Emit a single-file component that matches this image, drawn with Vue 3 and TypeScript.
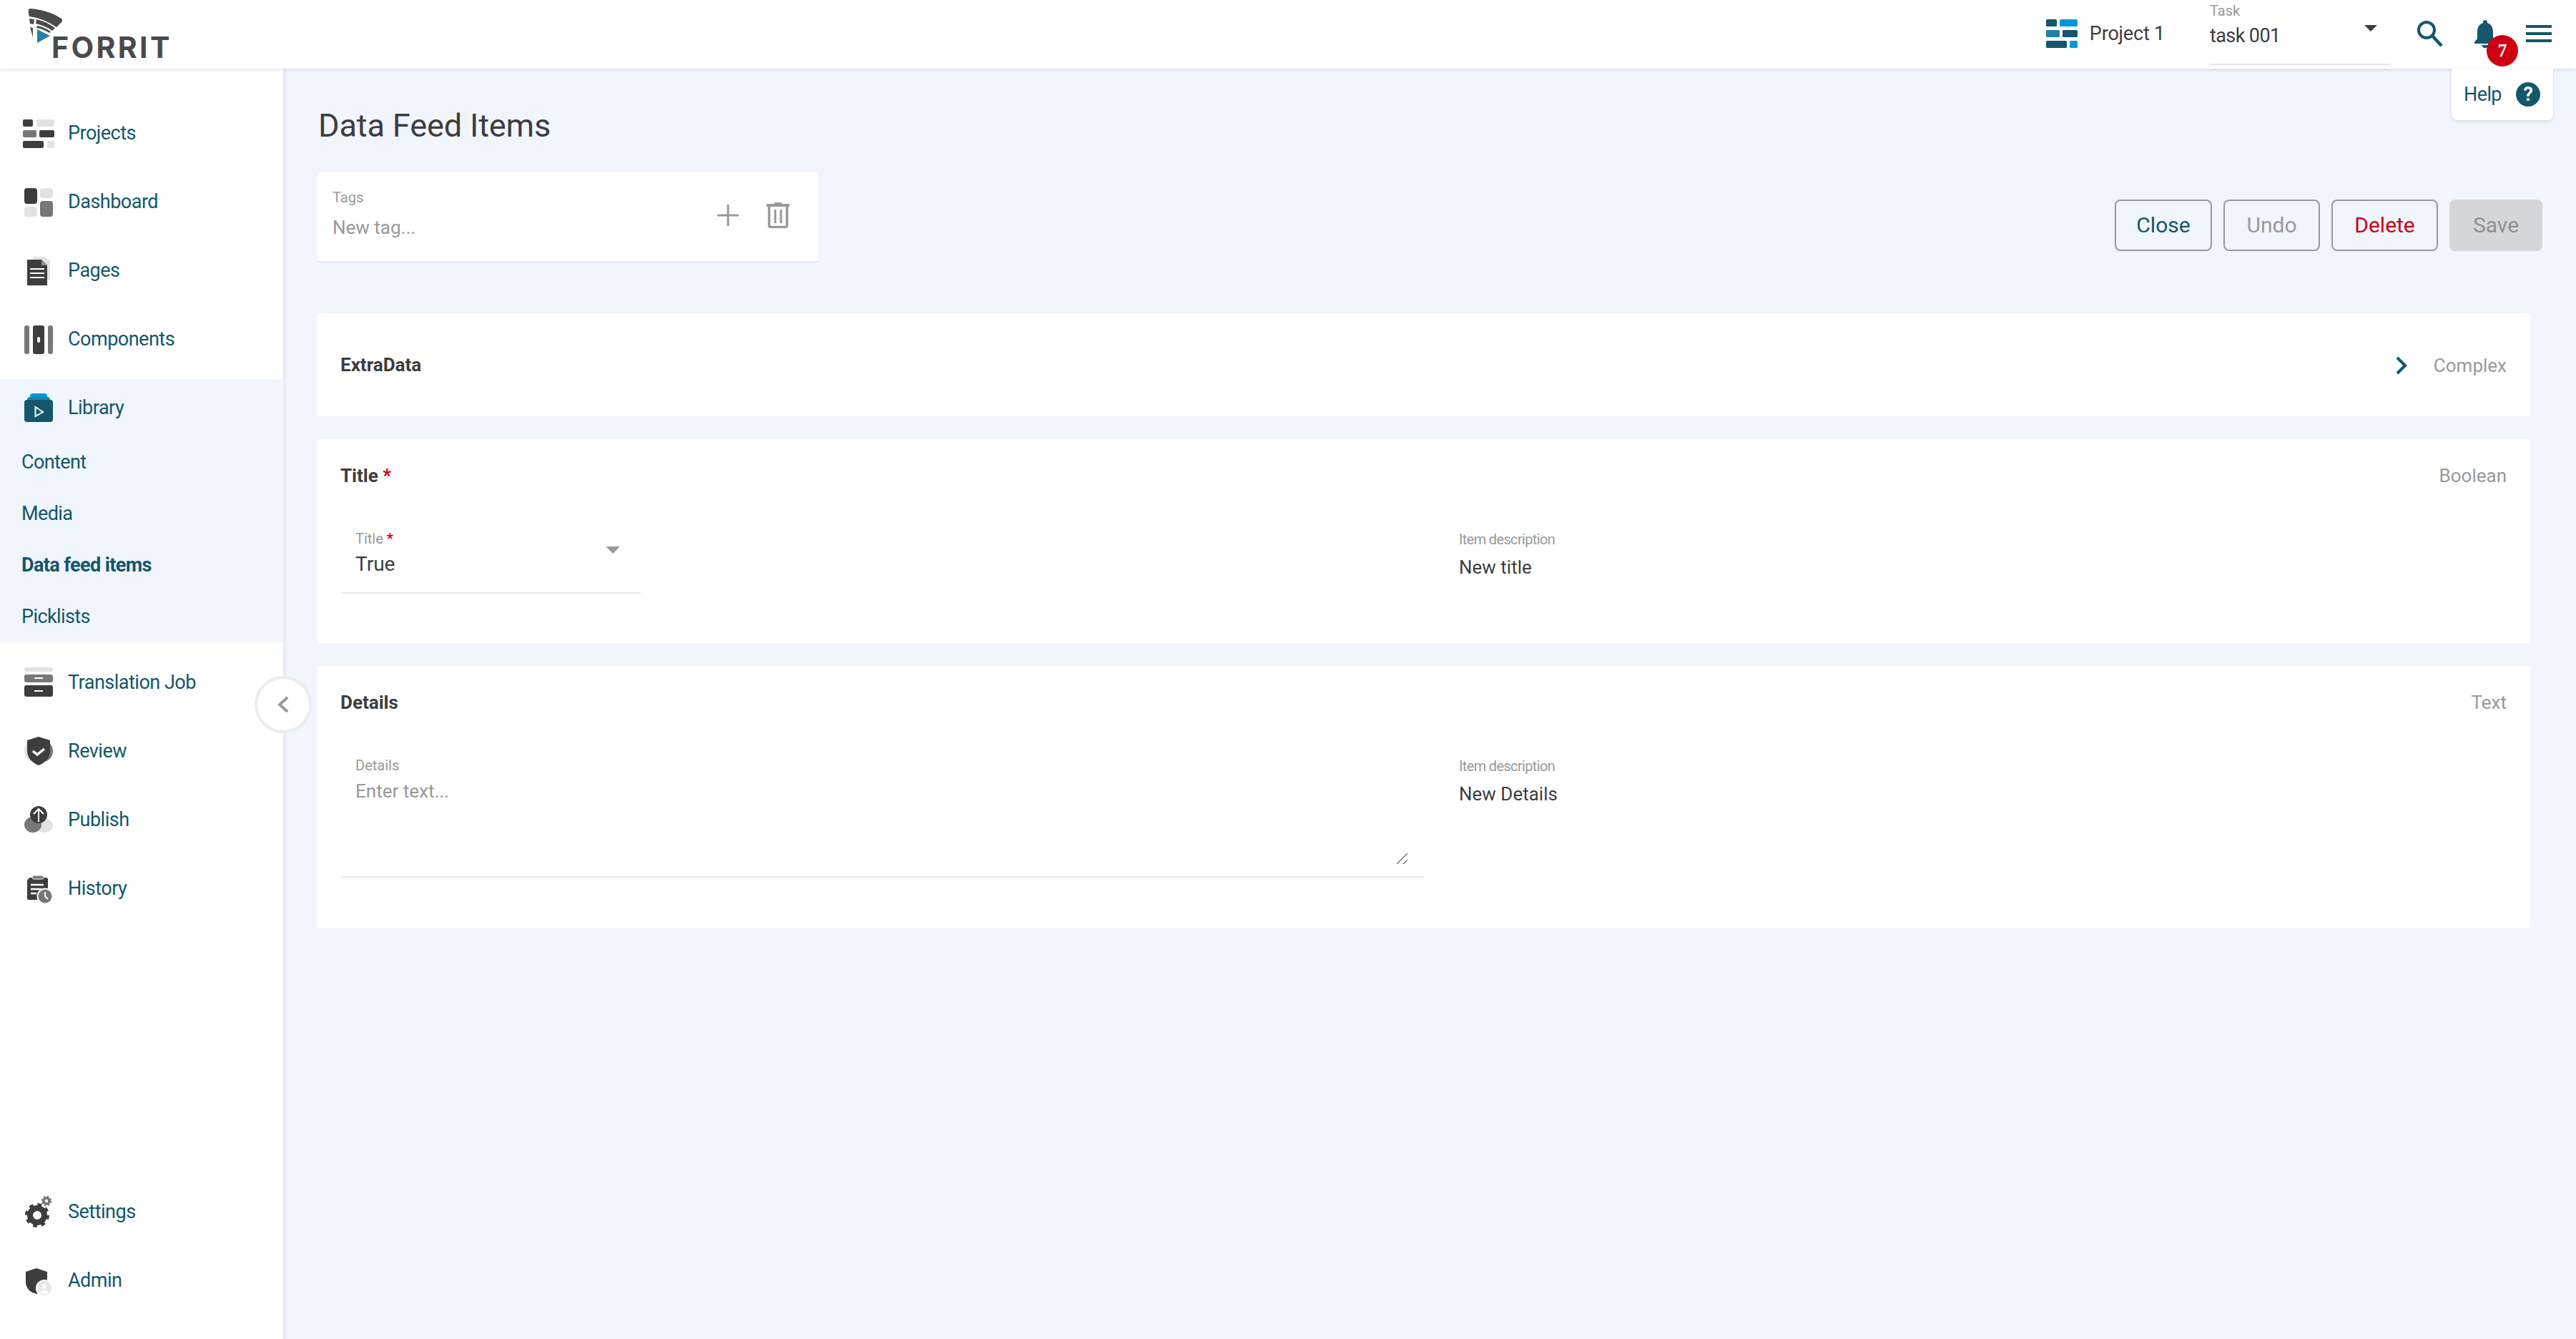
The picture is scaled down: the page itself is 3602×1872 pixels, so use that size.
<script setup lang="ts">
const subItems: { label: string; active?: boolean }[] = [
  { label: 'Content' },
  { label: 'Media' },
  { label: 'Data feed items', active: true },
  { label: 'Picklists' },
]
</script>

<template>
  <div class="app">
    <header class="topbar">
      <div class="logo">
        <svg class="logo-mark" width="60" height="62" viewBox="36 8 60 62">
          <path d="M42 12 C58 13 74 18 86 26 Q88 29 86 31 L79 38 C67 30 55 25 41 23 Q39 17 40 14 Q40 12 42 12 Z" fill="#4a4a4a" />
          <path d="M41 26 L48 27 L47 34 L42 33 Z" fill="#4a4a4a" />
          <path d="M51 27 C60 29 69 33 77 39 L73 43 C66 38 59 35 50 33 Z" fill="#4a4a4a" />
          <path d="M52 36 C59 37 65 40 71 44 L69 46 C64 43 58 40 51 39 Z" fill="#4a4a4a" />
          <path d="M42 38 L46 39 L46 52 Z" fill="#4a4a4a" />
          <path d="M52 41 L70 50 L52 60 Z" fill="#2482a8" />
        </svg>
        <span class="logo-text">FORRIT</span>
      </div>

      <div class="top-right">
        <div class="project">
          <svg width="44" height="40" viewBox="0 0 44 40">
            <rect x="0" y="0" width="15" height="10" rx="1.5" fill="#14566b" />
            <rect x="19" y="0" width="25" height="10" rx="1.5" fill="#0099dd" />
            <rect x="0" y="15" width="19" height="10" rx="1.5" fill="#2283a8" />
            <rect x="23" y="15" width="21" height="10" rx="1.5" fill="#14566b" />
            <rect x="0" y="30" width="29" height="10" rx="1.5" fill="#14566b" />
            <rect x="33" y="30" width="11" height="10" rx="1.5" fill="#0099dd" />
          </svg>
          <span>Project 1</span>
        </div>
        <div class="task">
          <span class="task-label">Task</span>
          <span class="task-value">task 001</span>
          <i class="task-caret"></i>
        </div>
        <svg class="search" width="36" height="36" viewBox="0 0 36 36" fill="none" stroke="#14566b">
          <circle cx="13" cy="13" r="11" stroke-width="4" />
          <path d="M21 21 L34 35" stroke-width="4.5" />
        </svg>
        <div class="bell">
          <svg width="32" height="40" viewBox="0 0 32 40" fill="#14566b">
            <path d="M16 0 Q19 0 19 4 C25 6 27 11 27 17 L27 26 L31 31 L31 33 L1 33 L1 31 L5 26 L5 17 C5 11 7 6 13 4 Q13 0 16 0 Z" />
            <path d="M11 35 L21 35 Q20 39 16 39 Q12 39 11 35 Z" />
          </svg>
          <span class="badge">7</span>
        </div>
        <div class="menu"><i></i><i></i><i></i></div>
      </div>

      <div class="help">
        <span>Help</span>
        <span class="help-mark">?</span>
      </div>
    </header>

    <div class="body">
      <aside class="sidebar">
        <nav class="nav-top">
          <a class="nav-row">
            <svg class="ico" width="44" height="48" viewBox="0 0 44 48">
              <rect x="0" y="5" width="14" height="10" rx="2" fill="#3d3d3d" />
              <rect x="19" y="5" width="25" height="10" rx="2" fill="#e2e2e2" />
              <rect x="0" y="20" width="19" height="10" rx="2" fill="#777" />
              <rect x="23" y="20" width="21" height="10" rx="2" fill="#3d3d3d" />
              <rect x="0" y="35" width="29" height="10" rx="2" fill="#3d3d3d" />
              <rect x="34" y="35" width="10" height="10" rx="2" fill="#e2e2e2" />
            </svg>
            <span>Projects</span>
          </a>
          <a class="nav-row">
            <svg class="ico" width="44" height="48" viewBox="0 0 44 48">
              <rect x="2" y="5" width="18" height="22" rx="4" fill="#3d3d3d" />
              <rect x="24" y="5" width="18" height="14" rx="4" fill="#e2e2e2" />
              <rect x="2" y="31" width="18" height="14" rx="4" fill="#e2e2e2" />
              <rect x="24" y="23" width="18" height="22" rx="4" fill="#777" />
            </svg>
            <span>Dashboard</span>
          </a>
          <a class="nav-row">
            <svg class="ico" width="44" height="48" viewBox="0 0 44 48">
              <path d="M14 5 L32 5 L38 11 L38 37 L14 37 Z" fill="#e2e2e2" />
              <path d="M6 9 L26 9 L34 17 L34 45 L6 45 Z" fill="#3d3d3d" />
              <path d="M26 9 L34 17 L26 17 Z" fill="#8a8a8a" />
              <path d="M10 22 H30 M10 28 H30 M10 34 H30" stroke="#fff" stroke-width="2" />
            </svg>
            <span>Pages</span>
          </a>
          <a class="nav-row">
            <svg class="ico" width="44" height="48" viewBox="0 0 44 48">
              <rect x="2" y="5" width="7" height="40" rx="3" fill="#777" />
              <rect x="14" y="5" width="16" height="40" rx="3" fill="#3d3d3d" />
              <rect x="35" y="5" width="7" height="40" rx="3" fill="#777" />
              <rect x="20" y="21" width="4" height="8" rx="2" fill="#fff" />
            </svg>
            <span>Components</span>
          </a>
        </nav>

        <section class="library">
          <a class="nav-row library-head">
            <svg class="ico" width="44" height="48" viewBox="0 0 44 48">
              <rect x="10" y="4" width="24" height="12" rx="4" fill="#0099dd" />
              <rect x="6" y="9" width="32" height="12" rx="4" fill="#2283a8" />
              <rect x="2" y="13" width="40" height="31" rx="4" fill="#14566b" />
              <path d="M17.500 23 L28 30 L17.500 36 Z" fill="none" stroke="#fff" stroke-width="2" />
            </svg>
            <span>Library</span>
          </a>
          <a v-for="item in subItems" :key="item.label" class="sub-row" :class="{ active: item.active }">{{ item.label }}</a>
        </section>

        <nav class="nav-mid">
          <a class="nav-row">
            <svg class="ico" width="44" height="48" viewBox="0 0 44 48">
              <rect x="2" y="3" width="40" height="6" rx="3" fill="#e2e2e2" />
              <rect x="2" y="13" width="40" height="11" rx="3" fill="#777" />
              <rect x="2" y="28" width="40" height="16" rx="3" fill="#3d3d3d" />
              <path d="M16 18 H28 M16 36 H28" stroke="#fff" stroke-width="2" />
            </svg>
            <span>Translation Job</span>
          </a>
          <a class="nav-row">
            <svg class="ico" width="44" height="48" viewBox="0 0 44 48">
              <ellipse cx="16" cy="24" rx="14" ry="15" fill="#e2e2e2" />
              <ellipse cx="28" cy="24" rx="14" ry="15" fill="#777" />
              <path d="M22 4 L38 9 L38 24 C38 34 30 41 22 44 C14 41 6 34 6 24 L6 9 Z" fill="#3d3d3d" />
              <path d="M14 24 L20 29 L30 21" fill="none" stroke="#fff" stroke-width="3.500" />
            </svg>
            <span>Review</span>
          </a>
          <a class="nav-row">
            <svg class="ico" width="44" height="48" viewBox="0 0 44 48">
              <ellipse cx="30" cy="32" rx="12" ry="10" fill="#e2e2e2" />
              <ellipse cx="14" cy="31" rx="12" ry="11" fill="#777" />
              <circle cx="22" cy="17" r="12" fill="#3d3d3d" />
              <path d="M22 27 V9 M15 16 L22 9 L29 16" fill="none" stroke="#fff" stroke-width="2" />
            </svg>
            <span>Publish</span>
          </a>
          <a class="nav-row">
            <svg class="ico" width="44" height="48" viewBox="0 0 44 48">
              <path d="M8 11 Q8 9 10 9 L33 9 Q35 9 35 11 L35 40 L8 40 Q6 40 6 38 L6 13 Q6 11 8 11 Z" fill="#3d3d3d" />
              <rect x="13" y="6" width="16" height="5" rx="2.500" fill="#777" stroke="#fff" stroke-width="1" />
              <path d="M11 19 H29 M11 25 H26 M11 31 H19" stroke="#fff" stroke-width="2.500" />
              <circle cx="31" cy="35" r="10.500" fill="#777" stroke="#fff" stroke-width="2" />
              <path d="M31 29 V35 L35 39" fill="none" stroke="#fff" stroke-width="2" />
            </svg>
            <span>History</span>
          </a>
        </nav>

        <nav class="nav-bottom">
          <a class="nav-row">
            <svg class="ico" width="44" height="48" viewBox="0 0 44 48">
              <g fill="none" stroke="#3d3d3d">
                <circle cx="20" cy="29" r="10" stroke-width="8" />
                <circle cx="20" cy="29" r="14.500" stroke-width="5" stroke-dasharray="5.500 5.890" />
              </g>
              <g fill="none" stroke="#777">
                <circle cx="33" cy="9" r="4" stroke-width="3.500" />
                <circle cx="33" cy="9" r="6" stroke-width="2.500" stroke-dasharray="2.500 2.210" />
              </g>
            </svg>
            <span>Settings</span>
          </a>
          <a class="nav-row">
            <svg class="ico" width="44" height="48" viewBox="0 0 44 48">
              <path d="M19 7 L34 12 L34 26 C34 36 27 41 19 43 C11 41 4 36 4 26 L4 12 Z" fill="#3d3d3d" />
              <circle cx="30" cy="35" r="12" fill="#fff" />
              <circle cx="30" cy="35" r="10" fill="#e6e6e6" />
              <circle cx="30" cy="32.500" r="3.200" fill="#fff" />
              <path d="M23.500 41 Q30 34 36.500 41 L30 44 Z" fill="#fff" />
            </svg>
            <span>Admin</span>
          </a>
        </nav>

        <button class="collapse" type="button" aria-label="Collapse">
          <svg width="18" height="24" viewBox="0 0 18 24" fill="none" stroke="#999" stroke-width="4">
            <path d="M15 2 L4 12 L15 22" />
          </svg>
        </button>
      </aside>

      <main class="main">
        <h1 class="page-title">Data Feed Items</h1>

        <div class="tag-row">
          <div class="tag-card">
            <div class="tag-field">
              <label class="tag-label">Tags</label>
              <input class="tag-input" type="text" placeholder="New tag..." />
            </div>
            <svg class="tag-plus" width="30" height="30" viewBox="0 0 30 30" stroke="#999" stroke-width="3">
              <path d="M15 0 V30 M0 15 H30" />
            </svg>
            <svg class="tag-trash" width="32" height="36" viewBox="0 0 32 36" fill="none" stroke="#999">
              <path d="M0 4 H32" stroke-width="4" />
              <path d="M11 1.500 H21" stroke-width="3" />
              <path d="M3.500 6 V32 Q3.500 34.500 6 34.500 H26 Q28.500 34.500 28.500 32 V6" stroke-width="3.500" />
              <path d="M12 10 V29 M20 10 V29" stroke-width="3" />
            </svg>
          </div>
          <div class="actions">
            <button class="btn close" type="button">Close</button>
            <button class="btn undo" type="button">Undo</button>
            <button class="btn delete" type="button">Delete</button>
            <button class="btn save" type="button">Save</button>
          </div>
        </div>

        <section class="card card-collapsed">
          <h2 class="card-title">ExtraData</h2>
          <div class="card-end">
            <svg width="16" height="26" viewBox="0 0 16 26" fill="none" stroke="#14566b" stroke-width="4">
              <path d="M2 2 L13 13 L2 24" />
            </svg>
            <span class="type">Complex</span>
          </div>
        </section>

        <section class="card">
          <div class="card-head">
            <h2 class="card-title">Title <b class="req">*</b></h2>
            <span class="type">Boolean</span>
          </div>
          <div class="field-grid">
            <div class="select">
              <div class="select-text">
                <span class="field-label">Title <b class="req">*</b></span>
                <span class="field-value">True</span>
              </div>
              <i class="select-caret"></i>
            </div>
            <div class="desc">
              <span class="field-label desc-label">Item description</span>
              <span class="desc-value">New title</span>
            </div>
          </div>
        </section>

        <section class="card card-last">
          <div class="card-head">
            <h2 class="card-title">Details</h2>
            <span class="type">Text</span>
          </div>
          <div class="field-grid">
            <div class="textarea-field">
              <span class="field-label">Details</span>
              <textarea class="textarea" placeholder="Enter text..."></textarea>
              <svg class="grip" width="15" height="15" viewBox="0 0 15 15" fill="none" stroke="#555" stroke-width="1.2">
                <path d="M0 15 L15 0 M9 15 L15 9" />
              </svg>
            </div>
            <div class="desc">
              <span class="field-label desc-label">Item description</span>
              <span class="desc-value">New Details</span>
            </div>
          </div>
        </section>
      </main>
    </div>
  </div>
</template>

<style>
html, body { margin: 0; padding: 0; background: #f1f5fd; }
</style>

<style scoped>
.app {
  width: 3602px;
  height: 1872px;
  display: flex;
  flex-direction: column;
  overflow: hidden;
  font-family: Roboto, "Liberation Sans", sans-serif;
  color: #3d3d3d;
  background: #f1f5fd;
}
.topbar {
  position: relative;
  z-index: 3;
  flex: none;
  height: 96px;
  display: flex;
  background: #fff;
  box-shadow: 0 2px 5px rgba(0, 0, 0, 0.1);
}
.logo { position: relative; padding: 51px 0 0 72px; }
.logo-mark { position: absolute; left: 36px; top: 8px; }
.logo-text {
  display: block;
  font-family: Inter, sans-serif;
  font-weight: 700;
  font-size: 41px;
  line-height: 30px;
  letter-spacing: 3.4px;
  color: #4a4a4a;
}
.top-right { margin-left: auto; display: flex; align-items: flex-start; padding-right: 32px; }
.project { display: flex; align-items: center; gap: 17px; margin-top: 27px; height: 40px; font-size: 27px; letter-spacing: -0.2px; }
.task { position: relative; width: 252px; height: 91px; margin-left: 63px; border-bottom: 2px solid #e8e8e8; box-sizing: border-box; }
.task-label { display: block; font-size: 20px; line-height: 24px; margin-top: 3px; color: #999; }
.task-value { display: block; font-size: 27px; line-height: 36px; margin-top: 5px; letter-spacing: -0.6px; }
.task-caret {
  position: absolute; right: 18px; top: 35px;
  border-left: 9px solid transparent; border-right: 9px solid transparent; border-top: 9px solid #3d3d3d;
}
.search { margin: 29px 0 0 38px; }
.bell { position: relative; margin: 28px 0 0 43px; width: 32px; height: 40px; }
.badge {
  position: absolute; left: 18px; top: 21px;
  width: 44px; height: 44px; border-radius: 50%;
  background: #cc0011; color: #fff;
  font: 700 26px/44px "Liberation Serif", serif;
  text-align: center;
}
.menu { margin: 35px 2px 0 41px; width: 36px; display: flex; flex-direction: column; gap: 6px; }
.menu i { display: block; height: 4px; background: #14566b; }
.help {
  position: absolute; left: 3428px; top: 96px;
  width: 142px; height: 72px; box-sizing: border-box;
  padding: 0 18px 0 17px;
  display: flex; align-items: center; justify-content: space-between;
  background: #fff; border-radius: 0 0 8px 8px;
  box-shadow: 0 2px 5px rgba(0, 0, 0, 0.1);
  font-size: 27px; color: #14566b; letter-spacing: -0.6px;
}
.help-mark {
  width: 34px; height: 34px; border-radius: 50%;
  background: #14566b; color: #fff;
  font-weight: 700; font-size: 27px; line-height: 34px; text-align: center;
}
.body { flex: 1; display: flex; min-height: 0; }
.sidebar {
  position: relative;
  z-index: 2;
  flex: none;
  width: 396px;
  display: flex;
  flex-direction: column;
  padding-top: 42px;
  background: #fff;
  border-right: 4px solid #e8ebf5;
}
.nav-row {
  display: flex;
  align-items: center;
  gap: 19px;
  height: 96px;
  padding-left: 32px;
  font-size: 27px;
  letter-spacing: -0.5px;
  color: #14566b;
}
.ico { flex: none; }
.library { margin-top: 8px; background: #f1f5fd; }
.library-head { height: 80px; }
.sub-row { display: block; height: 72px; line-height: 72px; padding-left: 30px; font-size: 27px; letter-spacing: -0.6px; color: #14566b; }
.sub-row.active { font-weight: 700; }
.nav-mid { margin-top: 8px; }
.nav-bottom { margin-top: auto; padding-bottom: 34px; }
.collapse {
  position: absolute; left: 356px; top: 849px;
  width: 80px; height: 80px; box-sizing: border-box;
  border: 4px solid #ececec; border-radius: 50%;
  background: #fff; padding: 0;
  display: flex; align-items: center; justify-content: center;
}
.main { flex: 1; min-width: 0; padding: 53px 64px 0 44px; }
.page-title { margin: 0; font-size: 45px; line-height: 54px; font-weight: 400; padding-left: 1px; letter-spacing: -0.1px; }
.tag-row { display: flex; justify-content: space-between; align-items: flex-end; margin: 37px -17px 0 0; }
.tag-card {
  width: 700px; height: 127px; box-sizing: border-box;
  display: flex; align-items: flex-start;
  padding: 0 40px 0 21px;
  background: #fff; border-radius: 8px 8px 0 0;
  border-bottom: 2px solid #e8e8e8;
}
.tag-field { flex: 1; display: flex; flex-direction: column; min-width: 0; }
.tag-label { font-size: 20px; line-height: 24px; margin-top: 24px; color: #999; }
.tag-input {
  border: 0; outline: 0; padding: 0; background: transparent;
  margin-top: 12px; height: 36px;
  font: 400 26px/36px Roboto, sans-serif; color: #3d3d3d;
}
.tag-input::placeholder { color: #999; opacity: 1; }
.tag-plus { margin-top: 46px; }
.tag-trash { margin: 43px 0 0 39px; }
.actions { display: flex; gap: 16px; padding-bottom: 16px; }
.btn {
  height: 72px; box-sizing: border-box;
  padding: 0; background: transparent;
  border: 2px solid #98989d; border-radius: 8px;
  font: 400 30px/1 Roboto, sans-serif;
}
.close { width: 136px; color: #14566b; }
.undo { width: 135px; color: #999; }
.delete { width: 149px; color: #cc0011; }
.save { width: 130px; background: #d5d6da; border-color: #d5d6da; color: #8f9094; }
.card { margin-top: 32px; padding: 35px 33px 0; height: 285px; box-sizing: border-box; background: #fff; }
.card-collapsed {
  margin-top: 71px; height: 144px; padding-top: 0; padding-bottom: 0;
  display: flex; align-items: center; justify-content: space-between;
}
.card-last { height: 366px; }
.card-head { display: flex; justify-content: space-between; align-items: center; height: 32px; }
.card-title { margin: 0 0 0 -1px; font-size: 26px; line-height: 32px; font-weight: 700; }
.card-end { display: flex; align-items: center; gap: 37px; padding-top: 2px; }
.type { font-size: 26px; color: #999; }
.req { color: #cc0011; font-weight: 700; }
.field-grid { display: grid; grid-template-columns: 1514px 1fr; column-gap: 49px; margin-top: 60px; }
.select {
  position: relative;
  width: 419px; height: 89px; box-sizing: border-box;
  padding-left: 20px;
  border-bottom: 2px solid #e8e8e8;
}
.select-text { display: flex; flex-direction: column; }
.field-label { display: block; font-size: 20px; line-height: 24px; color: #999; }
.desc-label { letter-spacing: -0.65px; }
.field-value { display: block; font-size: 28px; line-height: 36px; margin-top: 6px; }
.select-caret {
  position: absolute; right: 29px; top: 23px;
  border-left: 10px solid transparent; border-right: 10px solid transparent; border-top: 10px solid #999;
}
.desc { padding-top: 1px; }
.desc-value { display: block; font-size: 26px; line-height: 36px; margin-top: 9px; }
.textarea-field { position: relative; height: 169px; box-sizing: border-box; padding: 0 20px; border-bottom: 2px solid #e8e8e8; }
.textarea {
  display: block; width: 100%; height: 123px; box-sizing: border-box;
  margin-top: 6px; padding: 0; border: 0; outline: 0; background: transparent; resize: none;
  font: 400 26px/36px Roboto, sans-serif; color: #3d3d3d;
}
.textarea::placeholder { color: #999; opacity: 1; }
.grip { position: absolute; left: 1476px; top: 135px; }
</style>
